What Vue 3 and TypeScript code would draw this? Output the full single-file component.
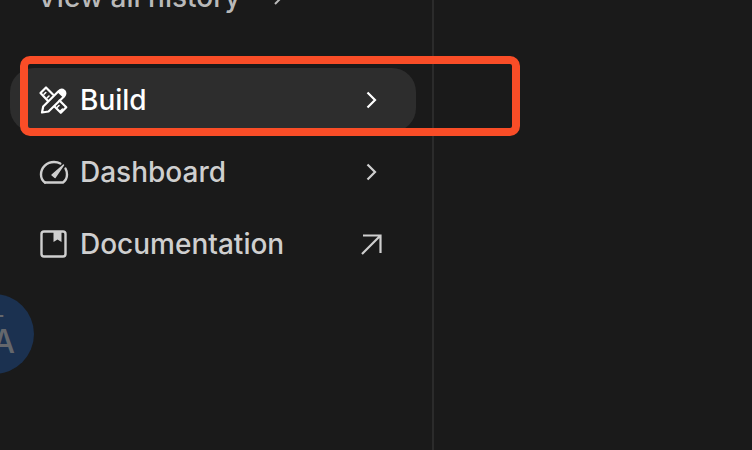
<template>
  <div class="page">
    <aside class="sidebar">
      <a class="history">
        <span>View all history</span>
        <svg class="history-arrow" width="20" height="20" viewBox="0 0 20 20" fill="none">
          <path d="M7 3l7 7-7 7" stroke="currentColor" stroke-width="2" />
        </svg>
      </a>

      <nav class="nav">
        <div v-for="item in items" :key="item.label" class="nav-item" :class="{ active: item.active }">
          <svg class="nav-icon" width="32" height="32" viewBox="0 0 32 32" fill="none" stroke="currentColor" stroke-width="2.4" stroke-linejoin="round" stroke-linecap="round">
            <template v-if="item.icon === 'build'">
              <path d="M10 17L2.500 9 8 3.500 15 10.500" stroke-width="2.200" />
              <path d="M16.500 22.500L22.800 28.800 28.300 23.200 21.500 16.500" stroke-width="2.200" />
              <path d="M7.800 8.500l-1.800 1.800M11 12l-1.800 1.800M21 21.500l-1.800 1.800M24.500 25l-1.800 1.800" stroke-width="1.600" />
              <path d="M4 28.500L5.200 22.500 20.500 7.200Q23.500 4.500 26.300 6.800 28.500 9.500 26 12.500L10.500 27.500Z" stroke-width="2.200" />
              <path d="M20.500 7.200Q23.500 4.500 26.300 6.800 28.500 9.500 26 12.500L25 13.500 19.500 8.200Z" fill="currentColor" stroke="none" />
            </template>
            <template v-else-if="item.icon === 'dashboard'">
              <path d="M7 26.500C4.200 24.500 3 21.800 3 18.500 3 11.300 8.800 6 16 6c2.300 0 4.500.5 6.300 1.600" />
              <path d="M27.500 12.500c1 1.800 1.500 3.800 1.500 6 0 3.300-1.300 6-4 8H7" />
              <path d="M14 19l11.500-10-8.500 12.500z" fill="currentColor" stroke-width="1.400" />
            </template>
            <template v-else>
              <rect x="3.500" y="3.500" width="24" height="25" rx="2.500" />
              <path d="M15.500 3.500h8v10.500l-4-2.500-4 2.500z" fill="currentColor" stroke="none" />
            </template>
          </svg>
          <span class="nav-label">{{ item.label }}</span>
          <svg class="nav-end" width="24" height="24" viewBox="0 0 24 24" fill="none" stroke="currentColor" stroke-width="2.200">
            <path v-if="item.external" d="M3 22L21 4M4 3.500H21.500V21" />
            <path v-else d="M8.500 4.500L16 12 8.500 19.500" />
          </svg>
        </div>
      </nav>
    </aside>

    <div class="highlight"></div>
    <div class="avatar">
      <span class="avatar-top">T</span>
      <span class="avatar-letter">A</span>
    </div>
  </div>
</template>

<script setup lang="ts">
interface NavItem {
  label: string
  icon: string
  active?: boolean
  external?: boolean
}

const items: NavItem[] = [
  { label: 'Build', icon: 'build', active: true },
  { label: 'Dashboard', icon: 'dashboard' },
  { label: 'Documentation', icon: 'docs', external: true },
]
</script>

<style>
html,
body {
  background: #1a1a1a;
  overflow: hidden;
}
</style>

<style scoped>
.page {
  position: relative;
  width: 752px;
  height: 450px;
  overflow: hidden;
  background: #1a1a1a;
  font-family: Inter, 'Liberation Sans', sans-serif;
}

.sidebar {
  display: flex;
  flex-direction: column;
  box-sizing: border-box;
  width: 434px;
  height: 450px;
  padding: 0 16px 0 10px;
  border-right: 2px solid #2b2b2b;
}

.history {
  display: flex;
  flex: none;
  align-items: center;
  gap: 27px;
  height: 34px;
  padding-left: 27px;
  margin-top: -20px;
  margin-bottom: 54px;
  color: #b9b9b9;
  font-size: 28px;
  font-weight: 450;
}

.history-arrow {
  color: #b9b9b9;
}

.nav {
  display: flex;
  flex-direction: column;
  gap: 8px;
}

.nav-item {
  display: flex;
  align-items: center;
  height: 64px;
  padding: 0 33px 0 28px;
  border-radius: 24px;
  color: #cfcfcf;
}

.nav-item.active {
  background: #2d2d2d;
  color: #fff;
}

.nav-icon {
  flex: none;
  width: 32px;
  height: 32px;
}

.nav-label {
  flex: 1;
  margin-left: 10px;
  font-size: 28px;
  font-weight: 450;
  line-height: 34px;
}

.nav-end {
  flex: none;
}

.highlight {
  position: absolute;
  left: 20px;
  top: 56px;
  box-sizing: border-box;
  width: 500px;
  height: 80px;
  border: 8px solid #f94d27;
  border-radius: 10px;
}

.avatar {
  position: absolute;
  left: -46px;
  top: 294px;
  width: 80px;
  height: 80px;
  border-radius: 50%;
  background: #1b3150;
  color: #64676c;
  font-weight: 500;
}

.avatar-letter {
  position: absolute;
  right: 19px;
  top: 37px;
  font-size: 32px;
  line-height: 22px;
}

.avatar-top {
  position: absolute;
  right: 30px;
  top: 24px;
  font-size: 20px;
  line-height: 10px;
}
</style>
